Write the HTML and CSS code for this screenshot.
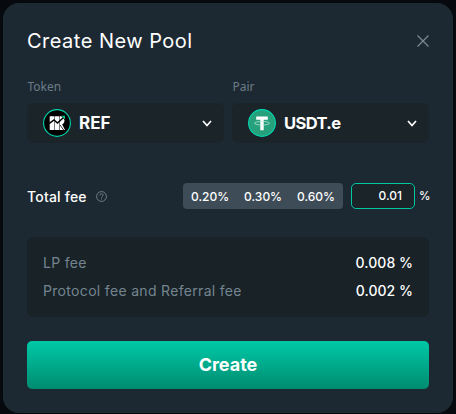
FILE: index.html
```html
<!DOCTYPE html>
<html lang="en">
<head>
<meta charset="utf-8">
<title>Create New Pool</title>
<link rel="stylesheet" href="styles.css">
</head>
<body>
<main class="modal">
  <header class="header">
    <h1 class="title">Create New Pool</h1>
    <svg class="close" width="12" height="12" viewBox="0 0 12 12"><path d="M.5.5l11 11M11.5.5l-11 11"/></svg>
  </header>
  <section class="tokens">
    <div class="field">
      <div class="label">Token</div>
      <div class="select">
        <svg class="coin" width="28" height="28" viewBox="0 0 28 28">
          <circle cx="14" cy="14" r="13.4" fill="#000" stroke="#00d6af" stroke-width="1.1"/>
          <path fill="#fff" d="M6.700 7.200h4.600V21H6.700zM11.800 7.200h4.400V21h-4.400zM16.700 7.200H19c1.800 1 2.700 2.600 2.500 4.600-.2 1.800-1 3-2.300 3.800L22 21h-5.300z"/>
          <path fill="none" stroke="#000" stroke-width="1.500" d="M6 14.600l5-3.600 3.500 3L20 9"/>
          <path fill="none" stroke="#000" stroke-width=".8" d="M17 16l4 5.500"/>
          <path fill="#000" d="M17.800 6.500H22v5z"/>
          <path fill="#00d08a" d="M18.500 6.800H22v3.600z"/>
        </svg>
        <span class="symbol ref">REF</span>
        <svg class="chevron" width="10" height="7" viewBox="0 0 10 7"><path d="M1 1l4 4.500L9 1"/></svg>
      </div>
    </div>
    <div class="field">
      <div class="label">Pair</div>
      <div class="select">
        <svg class="coin" width="28" height="28" viewBox="0 0 28 28">
          <circle cx="14" cy="14" r="13.400" fill="#26a17b" stroke="#00d6af" stroke-width="1.100"/>
          <path fill="#fff" d="M8.200 7.600h11.600v3.200h-4.100v10.400h-3.400V10.800H8.200z"/>
          <ellipse cx="14" cy="14.200" rx="7.500" ry="1.800" fill="none" stroke="#c5eadb" stroke-width=".7"/>
        </svg>
        <span class="symbol usdt">USDT.e</span>
        <svg class="chevron" width="10" height="7" viewBox="0 0 10 7"><path d="M1 1l4 4.500L9 1"/></svg>
      </div>
    </div>
  </section>
  <section class="fee">
    <span class="fee-label">Total fee</span>
    <svg class="help" width="11" height="11" viewBox="0 0 11 11"><circle cx="5.500" cy="5.500" r="4.900"/><path d="M3.900 4.400c0-2.200 3.200-2.200 3.200-.2 0 1.100-1.600 1.200-1.600 2.500M5.500 7.500v1"/></svg>
    <div class="presets"><span>0.20%</span><span>0.30%</span><span>0.60%</span></div>
    <div class="input">0.01</div>
    <span class="percent">%</span>
  </section>
  <section class="details">
    <div class="row"><span>LP fee</span><span class="value">0.008 %</span></div>
    <div class="row"><span>Protocol fee and Referral fee</span><span class="value">0.002 %</span></div>
  </section>
  <button class="create">Create</button>
</main>
</body>
</html>
```
FILE: styles.css
```css
* { box-sizing: border-box; }
body {
  margin: 0;
  padding: 3px;
  height: 414px;
  overflow: hidden;
  background: #060a0e;
  color: #fff;
  font-family: Inter, sans-serif;
}
.modal {
  width: 450px;
  height: 410px;
  padding: 24px;
  border-radius: 16px;
  background: #1d2932;
}
.header {
  display: flex;
  align-items: center;
  justify-content: space-between;
  height: 28px;
}
.title {
  margin: 0;
  font-size: 20px;
  line-height: 28px;
  font-weight: 400;
  letter-spacing: .48px;
}
.close { fill: none; stroke: #7e8a93; stroke-width: 1.2; }
.tokens { display: flex; gap: 8px; margin-top: 22px; }
.field { flex: 1; }
.label {
  height: 26px;
  padding-left: .5px;
  color: #6b7b87;
  font-family: "Noto Sans", sans-serif;
  font-size: 12px;
  line-height: 20px;
}
.select {
  display: flex;
  align-items: center;
  height: 40px;
  padding: 0 12px 0 16px;
  border-radius: 6px;
  background: #1a2429;
}
.symbol { margin-left: 8px; font-weight: 700; line-height: 20px; }
.ref { font-size: 17px; }
.usdt { font-size: 16.5px; letter-spacing: -.6px; }
.chevron { margin-left: auto; fill: none; stroke: #fff; stroke-width: 1.7; }
.fee { display: flex; align-items: center; height: 26px; margin-top: 40px; }
.fee-label {
  width: 69px;
  font-size: 14px;
  font-weight: 500;
  letter-spacing: .2px;
  white-space: nowrap;
}
.help { fill: none; stroke: #7b8790; stroke-width: .9; }
.presets {
  display: flex;
  align-items: center;
  justify-content: space-between;
  width: 160px;
  height: 26px;
  margin-left: auto;
  padding: 0 8px;
  border-radius: 4px;
  background: #3d4c57;
  font-size: 12px;
  font-weight: 500;
}
.input {
  width: 64px;
  height: 26px;
  margin-left: 8px;
  padding-right: 12px;
  border: 1px solid #00c6a2;
  border-radius: 5px;
  background: #1a2429;
  font-size: 12px;
  font-weight: 500;
  line-height: 24px;
  text-align: right;
}
.percent { width: 14px; padding-left: 4px; font-size: 11.5px; font-weight: 500; }
.details {
  height: 80px;
  margin-top: 28px;
  padding: 12px 16px;
  border-radius: 6px;
  background: #182227;
}
.row {
  display: flex;
  justify-content: space-between;
  height: 28px;
  color: #758590;
  font-size: 14px;
  line-height: 28px;
  letter-spacing: .32px;
}
.value { color: #fff; font-weight: 500; letter-spacing: .05px; }
.create {
  display: block;
  width: 100%;
  height: 48px;
  margin-top: 24px;
  padding: 0;
  border: 0;
  border-radius: 5px;
  background: linear-gradient(#00c9a7, #008c70);
  color: #fff;
  font: 700 18px/48px Inter, sans-serif;
}
```
